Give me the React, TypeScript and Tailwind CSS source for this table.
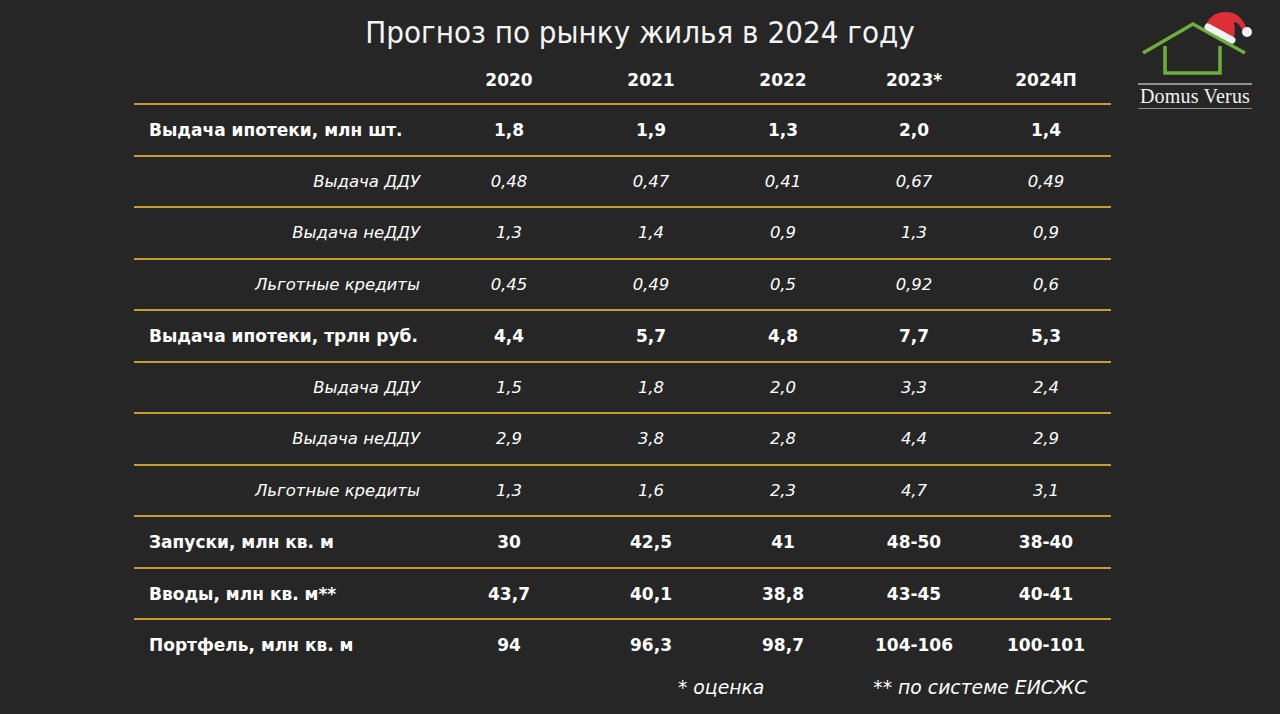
import React from "react";

type Row = { label: string; kind: "bold" | "italic"; values: string[] };

const rows: Row[] = [
  { label: "Выдача ипотеки, млн шт.", kind: "bold", values: ["1,8", "1,9", "1,3", "2,0", "1,4"] },
  { label: "Выдача ДДУ", kind: "italic", values: ["0,48", "0,47", "0,41", "0,67", "0,49"] },
  { label: "Выдача неДДУ", kind: "italic", values: ["1,3", "1,4", "0,9", "1,3", "0,9"] },
  { label: "Льготные кредиты", kind: "italic", values: ["0,45", "0,49", "0,5", "0,92", "0,6"] },
  { label: "Выдача ипотеки, трлн руб.", kind: "bold", values: ["4,4", "5,7", "4,8", "7,7", "5,3"] },
  { label: "Выдача ДДУ", kind: "italic", values: ["1,5", "1,8", "2,0", "3,3", "2,4"] },
  { label: "Выдача неДДУ", kind: "italic", values: ["2,9", "3,8", "2,8", "4,4", "2,9"] },
  { label: "Льготные кредиты", kind: "italic", values: ["1,3", "1,6", "2,3", "4,7", "3,1"] },
  { label: "Запуски, млн кв. м", kind: "bold", values: ["30", "42,5", "41", "48-50", "38-40"] },
  { label: "Вводы, млн кв. м**", kind: "bold", values: ["43,7", "40,1", "38,8", "43-45", "40-41"] },
  { label: "Портфель, млн кв. м", kind: "bold", values: ["94", "96,3", "98,7", "104-106", "100-101"] },
];

const years = ["2020", "2021", "2022", "2023*", "2024П"];

const gridCols = "grid grid-cols-[310px_130px_154px_110px_152px_112px_9px]";

function Logo() {
  return (
    <div className="absolute left-[1134px] top-[8px] w-[122px] flex flex-col items-center">
      <svg width="122" height="72" viewBox="0 0 122 72" className="block">
        {/* house */}
        <polyline points="9,45 59,16 111,45" fill="none" stroke="#6fae3c" strokeWidth="3.5" strokeLinejoin="miter" />
        <polyline points="31,38 31,65 86,65 86,38" fill="none" stroke="#6fae3c" strokeWidth="3.5" />
        {/* santa hat */}
        <path d="M72,19 C73,9 83,3 94,4 C104,5 110,12 113,22 L109,23 C106,17 103,14 100,14 C101,20 101,25 100,30 Z" fill="#dc2f38" />
        <line x1="74" y1="19" x2="98" y2="32" stroke="#f2f2f2" strokeWidth="7" strokeLinecap="round" />
        <circle cx="113" cy="24" r="5" fill="#f2f2f2" />
      </svg>
      <div className="w-[114px] h-[2px] bg-[#8f8f8f] mt-[3px]" />
      <div className="text-[20px] leading-[22px] text-[#f2f2f2] font-['Liberation_Serif',serif] tracking-[0.2px]">Domus Verus</div>
      <div className="w-[114px] h-[1px] bg-[#8f8f8f] mt-[1px]" />
    </div>
  );
}

export default function App() {
  return (
    <div className="relative w-[1280px] h-[714px] bg-[#262626] text-white overflow-hidden font-['DejaVu_Sans',sans-serif]">
      <Logo />
      <div className="h-[55px] flex items-center justify-center pt-[10px]">
        <h1 className="text-[31px] leading-none font-normal text-[#f4f4f4] font-['DejaVu_Sans_Condensed','DejaVu_Sans',sans-serif] font-stretch-condensed">Прогноз по рынку жилья в 2024 году</h1>
      </div>
      <div className="ml-[134px] w-[977px]">
        <div className={`${gridCols} h-[48px] pt-[3px] items-center font-bold text-[17px]`}>
          <div />
          {years.map((y) => (
            <div key={y} className="text-center">{y}</div>
          ))}
          <div />
        </div>
        {rows.map((r, i) => (
          <div key={i} className={`${gridCols} h-[51.5px] pt-[2px] items-center border-t-2 border-[#c59e2f]`}>
            {r.kind === "bold" ? (
              <div className="pl-[15px] font-bold text-[17px]">{r.label}</div>
            ) : (
              <div className="pr-[24px] text-right italic text-[16.5px]">{r.label}</div>
            )}
            {r.values.map((v, j) => (
              <div key={j} className={`text-center ${r.kind === "bold" ? "font-bold text-[17px]" : "italic text-[16.5px]"}`}>{v}</div>
            ))}
            <div />
          </div>
        ))}
      </div>
      <div className="flex mt-[4px] italic text-[18.8px]">
        <div className="ml-[678px]">* оценка</div>
        <div className="ml-[109px]">** по системе ЕИСЖС</div>
      </div>
    </div>
  );
}
